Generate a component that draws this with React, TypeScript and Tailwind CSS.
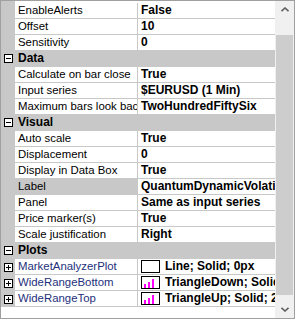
import React from 'react';

type Row =
  | { kind: 'cat'; name: string }
  | { kind: 'prop'; name: string; value: string; selected?: boolean }
  | { kind: 'plot'; name: string; value: string; bars?: boolean };

const rows: Row[] = [
  { kind: 'prop', name: 'EnableAlerts', value: 'False' },
  { kind: 'prop', name: 'Offset', value: '10' },
  { kind: 'prop', name: 'Sensitivity', value: '0' },
  { kind: 'cat', name: 'Data' },
  { kind: 'prop', name: 'Calculate on bar close', value: 'True' },
  { kind: 'prop', name: 'Input series', value: '$EURUSD (1 Min)' },
  { kind: 'prop', name: 'Maximum bars look back', value: 'TwoHundredFiftySix' },
  { kind: 'cat', name: 'Visual' },
  { kind: 'prop', name: 'Auto scale', value: 'True' },
  { kind: 'prop', name: 'Displacement', value: '0' },
  { kind: 'prop', name: 'Display in Data Box', value: 'True' },
  { kind: 'prop', name: 'Label', value: 'QuantumDynamicVolatility', selected: true },
  { kind: 'prop', name: 'Panel', value: 'Same as input series' },
  { kind: 'prop', name: 'Price marker(s)', value: 'True' },
  { kind: 'prop', name: 'Scale justification', value: 'Right' },
  { kind: 'cat', name: 'Plots' },
  { kind: 'plot', name: 'MarketAnalyzerPlot', value: 'Line; Solid; 0px' },
  { kind: 'plot', name: 'WideRangeBottom', value: 'TriangleDown; Solid; 2px', bars: true },
  { kind: 'plot', name: 'WideRangeTop', value: 'TriangleUp; Solid; 2px', bars: true },
];

const Box: React.FC<{ plus?: boolean }> = ({ plus }) => (
  <svg width="9" height="9" viewBox="0 0 9 9" className="block">
    <rect x="0.5" y="0.5" width="8" height="8" fill="#ffffff" stroke="#000000" />
    <line x1="2" y1="4.5" x2="7" y2="4.5" stroke="#000000" />
    {plus && <line x1="4.5" y1="2" x2="4.5" y2="7" stroke="#000000" />}
  </svg>
);

const Swatch: React.FC<{ bars?: boolean }> = ({ bars }) => (
  <svg width="19" height="13" viewBox="0 0 19 13" className="block shrink-0">
    <rect x="0.5" y="0.5" width="18" height="12" fill="#ffffff" stroke="#000000" />
    {bars && (
      <g fill="#ff00ff">
        <rect x="3" y="8" width="2" height="4" />
        <rect x="7" y="6" width="2" height="6" />
        <rect x="11" y="3" width="2" height="9" />
      </g>
    )}
  </svg>
);

const Chevron: React.FC<{ down?: boolean }> = ({ down }) => (
  <svg width="8" height="5" viewBox="0 0 8 5" className="block">
    <path d={down ? 'M0.5 0.8 L4 4 L7.5 0.8' : 'M0.5 4.2 L4 1 L7.5 4.2'} fill="none" stroke="#606060" strokeWidth="1.6" />
  </svg>
);

export default function App() {
  return (
    <div className="w-[295px] h-[319px] border border-[#a0a0a0] bg-white flex font-['Liberation_Sans',Arial,sans-serif] text-[11px] text-black overflow-hidden">
      <div className="flex-1 flex flex-col min-w-0">
        <div className="h-[2px] flex">
          <div className="w-[14px] bg-[#c8c8c8]" />
        </div>
        {rows.map((r, i) =>
          r.kind === 'cat' ? (
            <div key={i} className="h-[16px] flex bg-[#c8c8c8] border-b border-[#c8c8c8]">
              <div className="w-[14px] flex items-center justify-center">
                <Box />
              </div>
              <div className="pl-[3px] font-bold text-[12px] leading-[15px]">{r.name}</div>
            </div>
          ) : (
            <div key={i} className="h-[16px] flex">
              <div className="w-[14px] bg-[#c8c8c8] flex items-center justify-center">
                {r.kind === 'plot' && <Box plus />}
              </div>
              <div
                className={`w-[123px] shrink-0 border-b border-r border-[#c8c8c8] pl-[3px] text-[11.4px] leading-[15px] whitespace-nowrap overflow-hidden ${
                  r.kind === 'prop' && r.selected ? 'bg-[#c8c8c8]' : 'bg-white'
                } ${r.kind === 'plot' ? 'text-[#24307c]' : ''}`}
              >
                {r.name}
              </div>
              <div className="flex-1 min-w-0 border-b border-[#c8c8c8] pl-[3px] font-bold text-[12px] leading-[15px] whitespace-nowrap overflow-hidden flex items-center">
                {r.kind === 'plot' ? (
                  <>
                    <Swatch bars={r.bars} />
                    <span className="ml-[5px]">{r.value}</span>
                  </>
                ) : (
                  r.value
                )}
              </div>
            </div>
          )
        )}
      </div>
      <div className="w-[19px] shrink-0 bg-[#f0f0f0] flex flex-col">
        <div className="h-[17px] flex items-center justify-center">
          <Chevron />
        </div>
        <div className="flex-1 flex flex-col px-[1px]">
          <div className="h-[17px]" />
          <div className="h-[260px] bg-[#cdcdcd]" />
        </div>
        <div className="h-[17px] flex items-center justify-center">
          <Chevron down />
        </div>
      </div>
    </div>
  );
}
